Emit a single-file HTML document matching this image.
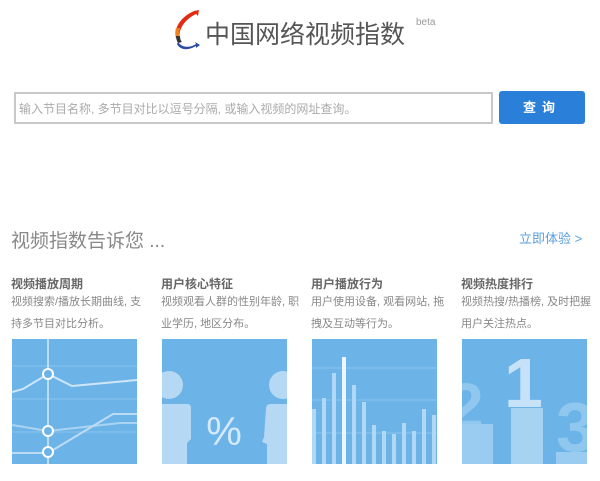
<!DOCTYPE html>
<html><head><meta charset="utf-8"><style>
*{margin:0;padding:0;box-sizing:border-box}
body{width:600px;height:481px;background:#fff;font-family:"Liberation Sans","Noto Sans CJK SC",sans-serif;position:relative;overflow:hidden}
.abs{position:absolute}
.title{left:205px;top:15px;font-size:25px;color:#555;white-space:nowrap;letter-spacing:0px}
.beta{left:416px;top:17px;font-size:10px;color:#999}
.inp{left:14px;top:92px;width:479px;height:32px;border:2px solid #c8c8c8;font-size:12px;color:#aaa;padding:6px 0 0 3px}
.btn{left:499px;top:91px;width:86px;height:33px;background:#2a7fd8;border-radius:3px;color:#fff;font-size:13px;font-weight:bold;text-align:center;line-height:33px;letter-spacing:6px}
.h{left:11px;top:226px;font-size:19px;color:#888}
.more{left:519px;top:228px;font-size:13px;color:#5a9fdd}
.ct{font-size:12px;font-weight:bold;color:#666;top:275px}
.cd{font-size:11px;color:#888;line-height:22px;top:291px;white-space:nowrap}
svg{position:absolute;top:339px}
</style></head><body>
<svg style="left:170px;top:8px" width="32" height="42" viewBox="0 0 32 42">
<path d="M24 3 L29 2 L28 8 L26 6 C14 12 8 22 10 30 L6 30 C4 20 10 10 22 4 Z" fill="#e42a14"/>
<path d="M6 20 L10 20 C9 24 9 27 10 30 L6 30 C5 27 5 23 6 20Z" fill="#f08020"/>
<path d="M6 28 L10 28 C10 31 11 33 12 34 L8 35 C7 33 6 31 6 28Z" fill="#333"/>
<path d="M8 34 C12 40 20 40 26 36 L25 34 L30 37 L26 40 L26 38 C18 43 10 42 7 36Z" fill="#2c4aa0"/>
</svg>
<div class="abs title">中国网络视频指数</div>
<div class="abs beta">beta</div>
<div class="abs inp">输入节目名称, 多节目对比以逗号分隔, 或输入视频的网址查询。</div>
<div class="abs btn">查询</div>
<div class="abs h">视频指数告诉您 ...</div>
<div class="abs more">立即体验 &gt;</div>

<div class="abs ct" style="left:11px">视频播放周期</div>
<div class="abs cd" style="left:11px">视频搜索/播放长期曲线, 支<br>持多节目对比分析。</div>
<div class="abs ct" style="left:161px">用户核心特征</div>
<div class="abs cd" style="left:161px">视频观看人群的性别年龄, 职<br>业学历, 地区分布。</div>
<div class="abs ct" style="left:311px">用户播放行为</div>
<div class="abs cd" style="left:311px">用户使用设备, 观看网站, 拖<br>拽及互动等行为。</div>
<div class="abs ct" style="left:461px">视频热度排行</div>
<div class="abs cd" style="left:461px">视频热搜/热播榜, 及时把握<br>用户关注热点。</div>

<svg style="left:12px" width="125" height="125">
<rect width="125" height="125" fill="#6cb3e8"/>
<g stroke="#8cc4ee" stroke-width="1"><line x1="0" y1="27" x2="125" y2="27"/><line x1="0" y1="60" x2="125" y2="60"/><line x1="0" y1="93" x2="125" y2="93"/></g>
<line x1="36" y1="0" x2="36" y2="125" stroke="#d6ebfa" stroke-width="1.5"/>
<polyline points="0,53 11,50 36,35 60,47 125,41" fill="none" stroke="#cfe6f8" stroke-width="2"/>
<polyline points="0,86 36,92 108,84 125,84" fill="none" stroke="#a9d3f2" stroke-width="2"/>
<polyline points="0,114 36,114 101,75 125,75" fill="none" stroke="#bcdcf5" stroke-width="2"/>
<g fill="#6cb3e8" stroke="#fff" stroke-width="2"><circle cx="36" cy="35" r="5"/><circle cx="36" cy="92" r="5"/><circle cx="36" cy="113" r="5"/></g>
</svg>

<svg style="left:162px" width="125" height="125">
<rect width="125" height="125" fill="#6cb3e8"/>
<g fill="#b5d9f4"><circle cx="7" cy="46" r="14"/><path d="M0 65 H25 Q29 65 29 69 V100 L25 104 V125 H0Z"/>
<circle cx="121" cy="46" r="14"/><path d="M125 65 H108 Q104 65 104 70 L102 98 L100 103 L105 105 V125 H125Z"/></g>
<text x="62" y="106" font-size="40" fill="#d4e9f9" text-anchor="middle" font-family="Liberation Sans">%</text>
</svg>

<svg style="left:312px" width="125" height="125">
<rect width="125" height="125" fill="#6cb3e8"/>
<g stroke="#8cc4ee" stroke-width="1"><line x1="0" y1="29" x2="125" y2="29"/><line x1="0" y1="61" x2="125" y2="61"/><line x1="0" y1="94" x2="125" y2="94"/></g>
<g fill="#b0d7f3">
<rect x="0" y="70" width="4" height="55"/><rect x="10" y="59" width="4" height="66"/><rect x="20" y="34" width="4" height="91"/>
<rect x="30" y="18" width="4" height="107" fill="#eaf5fd"/><rect x="40" y="46" width="4" height="79"/><rect x="50" y="63" width="4" height="62"/>
<rect x="60" y="86" width="4" height="39"/><rect x="70" y="92" width="4" height="33"/><rect x="80" y="95" width="4" height="30"/>
<rect x="90" y="84" width="4" height="41"/><rect x="100" y="92" width="4" height="33"/><rect x="110" y="70" width="4" height="55"/><rect x="120" y="76" width="4" height="49"/></g>
</svg>

<svg style="left:462px" width="125" height="125">
<rect width="125" height="125" fill="#6cb3e8"/>
<g font-family="Liberation Sans" font-weight="bold">
<text x="-14" y="89" font-size="64" fill="#90c7ef">2</text>
<text x="42" y="68" font-size="70" fill="#c6e2f8">1</text>
<text x="94" y="112" font-size="70" fill="#90c7ef">3</text></g>
<rect x="0" y="85" width="31" height="40" fill="#9accf1"/>
<rect x="49" y="69" width="32" height="56" fill="#a7d3f3"/>
<rect x="94" y="113" width="31" height="12" fill="#9accf1"/>
</svg>
</body></html>
